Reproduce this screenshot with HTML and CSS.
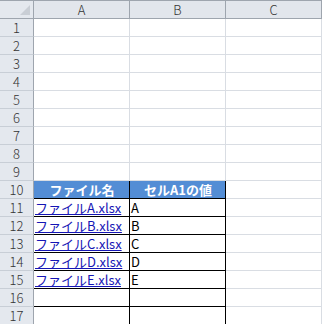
FILE: index.html
```html
<!DOCTYPE html>
<html lang="ja">
<head>
    <meta charset="UTF-8">
    <title>Sheet1</title>
    <link rel="stylesheet" href="styles.css">
</head>
<body>
    <div class="sheet">
        <!-- column headers -->
        <div class="corner"><span class="corner-mark"></span></div>
        <div class="col-head">A</div>
        <div class="col-head">B</div>
        <div class="col-head">C</div>

        <div class="row-head">1</div><div class="cell"></div><div class="cell"></div><div class="cell"></div>
        <div class="row-head">2</div><div class="cell"></div><div class="cell"></div><div class="cell"></div>
        <div class="row-head">3</div><div class="cell"></div><div class="cell"></div><div class="cell"></div>
        <div class="row-head">4</div><div class="cell"></div><div class="cell"></div><div class="cell"></div>
        <div class="row-head">5</div><div class="cell"></div><div class="cell"></div><div class="cell"></div>
        <div class="row-head">6</div><div class="cell"></div><div class="cell"></div><div class="cell"></div>
        <div class="row-head">7</div><div class="cell"></div><div class="cell"></div><div class="cell"></div>
        <div class="row-head">8</div><div class="cell"></div><div class="cell"></div><div class="cell"></div>
        <div class="row-head">9</div><div class="cell"></div><div class="cell"></div><div class="cell"></div>

        <div class="row-head">10</div>
        <div class="cell tbl th">ファイル名</div>
        <div class="cell tbl th">セルA1の値</div>
        <div class="cell"></div>

        <div class="row-head">11</div>
        <div class="cell tbl"><a href="#">ファイルA.xlsx</a></div>
        <div class="cell tbl">A</div>
        <div class="cell"></div>

        <div class="row-head">12</div>
        <div class="cell tbl"><a href="#">ファイルB.xlsx</a></div>
        <div class="cell tbl">B</div>
        <div class="cell"></div>

        <div class="row-head">13</div>
        <div class="cell tbl"><a href="#">ファイルC.xlsx</a></div>
        <div class="cell tbl">C</div>
        <div class="cell"></div>

        <div class="row-head">14</div>
        <div class="cell tbl"><a href="#">ファイルD.xlsx</a></div>
        <div class="cell tbl">D</div>
        <div class="cell"></div>

        <div class="row-head">15</div>
        <div class="cell tbl"><a href="#">ファイルE.xlsx</a></div>
        <div class="cell tbl">E</div>
        <div class="cell"></div>

        <div class="row-head">16</div><div class="cell tbl"></div><div class="cell tbl"></div><div class="cell"></div>
        <div class="row-head">17</div><div class="cell tbl"></div><div class="cell tbl"></div><div class="cell"></div>
    </div>
</body>
</html>
```

FILE: styles.css
```css
* {
    margin: 0;
    padding: 0;
    box-sizing: border-box;
}

body {
    background: #fff;
    font-family: "Noto Sans CJK JP", "DejaVu Sans", sans-serif;
    font-size: 13px;
    color: #000;
    overflow: hidden;
}

/* Grid of cells */
.sheet {
    display: grid;
    grid-template-columns: 34px 96px 96px 96px;
    grid-template-rows: 19px;
    grid-auto-rows: 18px;
}

.corner,
.col-head,
.row-head {
    background: #e4e8ee;
    border-right: 1px solid #9ea5ae;
    border-bottom: 1px solid #9ea5ae;
    color: #333;
    display: flex;
    align-items: center;
    justify-content: center;
    font-weight: 300;
    line-height: 1;
}

.corner,
.col-head {
    border-top: 1px solid #9ea5ae;
}

.col-head {
    background: #e2e6ec;
}

.row-head {
    border-bottom-color: #c8ced6;
}

.corner {
    position: relative;
}

.corner-mark {
    position: absolute;
    right: 3px;
    bottom: 3px;
    width: 0;
    height: 0;
    border-left: 10px solid transparent;
    border-bottom: 10px solid #c9ced5;
}

.cell {
    border-right: 1px solid #d9dde3;
    border-bottom: 1px solid #d9dde3;
    display: flex;
    align-items: center;
    padding-left: 1px;
    line-height: 1;
    white-space: nowrap;
    overflow: hidden;
}

/* Bordered table area */
.cell.tbl {
    border-right-color: #000;
    border-bottom-color: #000;
}

.cell.th {
    background: #538dd5;
    color: #fff;
    font-weight: bold;
    justify-content: center;
}

.cell a {
    color: #1515b5;
    text-decoration: underline;
}
```
